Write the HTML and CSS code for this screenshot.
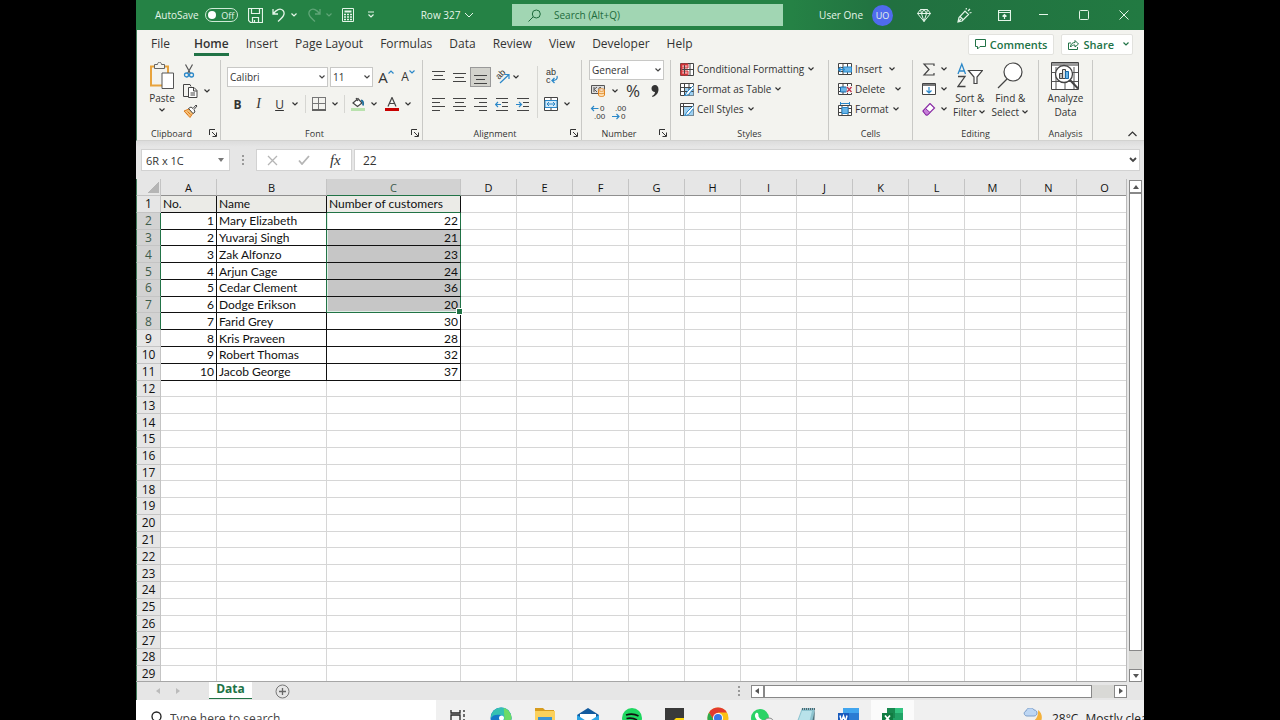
FILE: index.html
```html
<!DOCTYPE html>
<html lang="en">

<head>
    <meta charset="UTF-8">
    <meta name="viewport" content="width=device-width, initial-scale=1.0">
    <link rel="stylesheet" href="styles.css">
    <title>Row 327 - Excel</title>
</head>

<body>
    <svg class="sprite" aria-hidden="true">
        <symbol id="chev" viewBox="0 0 8 8"><path d="M1.500 2.500L4 5l2.500-2.500" fill="none" stroke="currentColor" stroke-width="1.200"/></symbol>
        <symbol id="launch" viewBox="0 0 8 8"><path d="M.5 6V.5H6M3 3l4 4M7.500 3.500v4h-4" fill="none" stroke="currentColor"/></symbol>
    </svg>

    <div class="app">
        <header class="titlebar">
            <div class="quick">
                <label class="autosave" for="autosave">AutoSave</label>
                <button class="toggle" id="autosave"><span class="knob"></span>Off</button>
                <button class="quick-btn" aria-label="Save"><svg width="15" height="15" viewBox="0 0 15 15"><path d="M.5.5h14v14h-12l-2-2zM3.500.5v5h8v-5M4.500 14.500v-5h6v5M6.500 12v2" fill="none" stroke="currentColor" stroke-width="1.200"/></svg></button>
                <button class="quick-btn" aria-label="Undo"><svg width="14" height="14" viewBox="0 0 14 14"><path d="M1 1v5h5M1.500 5.500C4 2 8-.5 11 2.500c3 3.500-.5 7-5 11" fill="none" stroke="currentColor" stroke-width="1.300"/></svg><svg width="8" height="8"><use href="#chev"/></svg></button>
                <button class="quick-btn dim" aria-label="Redo"><svg width="14" height="14" viewBox="0 0 14 14"><path d="M13 1v5H8M12.500 5.500C10 2 6-.5 3 2.500c-3 3.500.5 7 5 11" fill="none" stroke="currentColor" stroke-width="1.300"/></svg><svg width="8" height="8"><use href="#chev"/></svg></button>
                <button class="quick-btn" aria-label="Calculator"><svg width="12" height="14" viewBox="0 0 12 14"><path d="M.5.5h11v13H.5z" fill="none" stroke="currentColor"/><path d="M2.500 3.500h7" stroke="currentColor" stroke-width="2"/><path d="M2 6.500h8M2 9h8M2 11.500h8" stroke="currentColor" stroke-width="1.500" stroke-dasharray="2 1"/></svg></button>
                <button class="quick-btn last" aria-label="Customize toolbar"><svg width="8" height="8" viewBox="0 0 8 8"><path d="M1 1h6M1.500 3.500L4 6l2.500-2.500" fill="none" stroke="currentColor" stroke-width="1.200"/></svg></button>
                <button class="doc-name">Row 327<svg width="10" height="7" viewBox="0 0 10 7"><path d="M1 1l4 4 4-4" fill="none" stroke="currentColor"/></svg></button>
            </div>
            <div class="search">
                <svg width="13" height="13" viewBox="0 0 13 13"><path d="M.5 12.500L5 8M4.300 5a4 4 0 1 1 8 0a4 4 0 0 1-8 0" fill="none" stroke="currentColor"/></svg>
                <input class="search-input" type="text" placeholder="Search (Alt+Q)" aria-label="Search">
            </div>
            <div class="account">
                <span class="user">User One</span>
                <span class="avatar">UO</span>
                <button class="win-btn" aria-label="Premium"><svg width="14" height="13" viewBox="0 0 14 13"><path d="M3.500.5h7l3 4L7 12.500.5 4.500zM.5 4.500h13M3.500.5l1 4L7 12.500l2.500-8 1-4M4.500 4.500L7 .5l2.500 4" fill="none" stroke="currentColor"/></svg></button>
                <button class="win-btn" aria-label="Feedback"><svg width="15" height="15" viewBox="0 0 15 15"><path d="M1 14l1-4.500L8 3l3.500 3.500L5 13zM3 8.500L6.500 12M1 14l3-3M9 1.500l.5-1.500M11 3l2-2M12.500 5l2-.5" fill="none" stroke="currentColor" stroke-width="1.200"/></svg></button>
                <button class="win-btn" aria-label="Ribbon display"><svg width="13" height="11" viewBox="0 0 13 11"><path d="M.5.5h12v10H.5zM.5 2.500h12M6.500 9V4.500M4.500 6.500l2-2 2 2" fill="none" stroke="currentColor" stroke-width="1.200"/></svg></button>
                <button class="win-btn" aria-label="Minimize"><svg width="10" height="10" viewBox="0 0 10 10"><path d="M0 4.500h9" stroke="currentColor"/></svg></button>
                <button class="win-btn" aria-label="Maximize"><svg width="10" height="10" viewBox="0 0 10 10"><rect x=".5" y=".5" width="9" height="9" rx="1" fill="none" stroke="currentColor"/></svg></button>
                <button class="win-btn" aria-label="Close"><svg width="10" height="10" viewBox="0 0 10 10"><path d="M.5.5l9 9M9.500.5l-9 9" stroke="currentColor"/></svg></button>
            </div>
        </header>

        <nav class="tabs">
            <a class="tab first" href="#">File</a>
            <a class="tab active" href="#">Home</a>
            <a class="tab" href="#">Insert</a>
            <a class="tab" href="#">Page Layout</a>
            <a class="tab" href="#">Formulas</a>
            <a class="tab" href="#">Data</a>
            <a class="tab" href="#">Review</a>
            <a class="tab" href="#">View</a>
            <a class="tab" href="#">Developer</a>
            <a class="tab" href="#">Help</a>
            <button class="pill push"><svg width="11" height="11" viewBox="0 0 11 11"><path d="M.5.5h10v7H5l-2.500 2.500V7.500h-2z" fill="none" stroke="currentColor"/></svg>Comments</button>
            <button class="pill"><svg width="11" height="11" viewBox="0 0 11 11"><path d="M3 4H.5v6.500h9V8M2.500 8c0-3 2-4.500 4.500-4.500v-2L10.500 5 7 8V6C5 6 3.500 6.500 2.500 8z" fill="none" stroke="currentColor"/></svg>Share<svg class="pill-chev" width="8" height="8"><use href="#chev"/></svg></button>
        </nav>

        <section class="ribbon">
            <div class="group">
                <div class="group-body clipboard">
                    <button class="big paste"><svg width="26" height="28" viewBox="0 0 26 28"><path d="M2 4.500h17v19H2z" fill="none" stroke="#e8a33d" stroke-width="2"/><path d="M5.500 6.500v-4h3c0-3 4-3 4 0h3v4z" fill="#f3f3ef" stroke="#666"/><path d="M13 11h11.500v15.500H13z" fill="#fff" stroke="#555"/></svg>Paste<svg width="8" height="8"><use href="#chev"/></svg></button>
                    <div class="tool-col">
                        <button class="tool" aria-label="Cut"><svg width="12" height="14" viewBox="0 0 12 14"><path d="M2.500.5l5 9M9.500.5l-5 9" stroke="#555" stroke-width="1.200"/><circle cx="3.500" cy="11" r="2" fill="none" stroke="#2b88c9" stroke-width="1.300"/><circle cx="8.500" cy="11" r="2" fill="none" stroke="#2b88c9" stroke-width="1.300"/></svg></button>
                        <button class="tool" aria-label="Copy"><svg width="15" height="14" viewBox="0 0 15 14"><path d="M5 12.500H.5V.5H7l1 2" fill="none" stroke="#444"/><path d="M5.500 3.500h5.500l3 3v7H5.500zM10.500 3.500v3.500h3.500M7.500 9h4.500M7.500 11h4.500" fill="#fff" stroke="#444"/></svg><svg width="8" height="8"><use href="#chev"/></svg></button>
                        <button class="tool" aria-label="Format Painter"><svg width="15" height="14" viewBox="0 0 15 14"><path d="M1 7l5-2 4 4-3 4.500z" fill="#f4c078" stroke="#dd7a1b"/><path d="M3 9l2 2M4.500 7.500l3 3" stroke="#dd7a1b"/><path d="M5.500 4.500L8 3l2 1.500L13 1l1 1-3 3.500L12 8l-2 1.500z" fill="#fff" stroke="#444"/></svg></button>
                    </div>
                </div>
                <div class="group-label">Clipboard<svg class="launcher" width="8" height="8"><use href="#launch"/></svg></div>
            </div>

            <div class="group">
                <div class="group-body rows">
                    <div class="tool-row">
                        <select class="box font-name" aria-label="Font"><option>Calibri</option></select>
                        <select class="box font-size" aria-label="Font size"><option>11</option></select>
                        <button class="letter grow" aria-label="Increase font size">A<svg width="6" height="4" viewBox="0 0 6 4"><path d="M.5 3.500L3 1l2.500 2.500" fill="none" stroke="#2b88c9" stroke-width="1.200"/></svg></button>
                        <button class="letter shrink" aria-label="Decrease font size">A<svg width="6" height="4" viewBox="0 0 6 4"><path d="M.5.5L3 3 5.500.5" fill="none" stroke="#2b88c9" stroke-width="1.200"/></svg></button>
                    </div>
                    <div class="tool-row">
                        <button class="char bold">B</button>
                        <button class="char italic">I</button>
                        <button class="char underline">U</button>
                        <button class="drop" aria-label="Underline style"><svg width="8" height="8"><use href="#chev"/></svg></button>
                        <span class="divider"></span>
                        <button class="tool" aria-label="Borders"><svg width="14" height="14" viewBox="0 0 14 14"><path d="M.5 0v12M13.500 0v12M6.500 0v12M0 .5h14M0 6.500h14" stroke="#777"/><path d="M0 13h14" stroke="#333" stroke-width="1.500"/></svg><svg width="8" height="8"><use href="#chev"/></svg></button>
                        <span class="divider"></span>
                        <button class="tool" aria-label="Fill color"><svg width="14" height="14" viewBox="0 0 14 14"><path d="M2 6l5-4.500L11 6 6.500 9.500zM5 1l2 3" fill="#fff" stroke="#444" stroke-width="1.200"/><path d="M10 3.500c2 0 2.500 2 2 5" fill="none" stroke="#1f6f9c" stroke-width="1.800"/><path d="M0 11h14v3H0z" fill="#b9e2ae"/></svg><svg width="8" height="8"><use href="#chev"/></svg></button>
                        <button class="tool" aria-label="Font color"><svg width="14" height="14" viewBox="0 0 14 14"><path d="M3 9.500L7 .5l4 9M4.500 6.500h5" fill="none" stroke="#444" stroke-width="1.200"/><path d="M0 11h14v3H0z" fill="#c80000"/></svg><svg width="8" height="8"><use href="#chev"/></svg></button>
                    </div>
                </div>
                <div class="group-label">Font<svg class="launcher" width="8" height="8"><use href="#launch"/></svg></div>
            </div>

            <div class="group">
                <div class="group-body align">
                    <div class="align-grid">
                        <button class="sq" aria-label="Top align"><svg width="13" height="13" viewBox="0 0 13 13"><path d="M0 .5h13M2 4.500h9M0 8.500h13" stroke="#444"/></svg></button>
                        <button class="sq" aria-label="Middle align"><svg width="13" height="13" viewBox="0 0 13 13"><path d="M0 2.500h13M2 6.500h9M0 10.500h13" stroke="#444"/></svg></button>
                        <button class="sq on" aria-label="Bottom align"><svg width="13" height="13" viewBox="0 0 13 13"><path d="M0 4.500h13M2 8.500h9M0 12.500h13" stroke="#444"/></svg></button>
                        <button class="sq wide" aria-label="Orientation"><svg class="glyph" width="15" height="14" viewBox="0 0 15 14"><text x="0" y="0" font-size="9" transform="translate(4 10) rotate(-45)" fill="#333">ab</text><path d="M5 13l8.500-8M9.500 4.500H14V9" fill="none" stroke="#2b88c9" stroke-width="1.200"/></svg><svg width="8" height="8"><use href="#chev"/></svg></button>
                        <button class="sq" aria-label="Align left"><svg width="13" height="13" viewBox="0 0 13 13"><path d="M0 .5h13M0 4.500h8M0 8.500h13M0 12.500h8" stroke="#444"/></svg></button>
                        <button class="sq" aria-label="Center"><svg width="13" height="13" viewBox="0 0 13 13"><path d="M0 .5h13M2 4.500h9M0 8.500h13M2 12.500h9" stroke="#444"/></svg></button>
                        <button class="sq" aria-label="Align right"><svg width="13" height="13" viewBox="0 0 13 13"><path d="M0 .5h13M5 4.500h8M0 8.500h13M5 12.500h8" stroke="#444"/></svg></button>
                        <button class="sq" aria-label="Decrease indent"><svg width="13" height="13" viewBox="0 0 13 13"><path d="M1 .5h12M7 4.500h6M7 8.500h6M1 12.500h12" stroke="#444"/><path d="M6 6.500H.5M3 4L.5 6.500 3 9" fill="none" stroke="#2b88c9" stroke-width="1.200"/></svg></button>
                        <button class="sq" aria-label="Increase indent"><svg width="13" height="13" viewBox="0 0 13 13"><path d="M1 .5h12M7 4.500h6M7 8.500h6M1 12.500h12" stroke="#444"/><path d="M0 6.500h5.500M3 4l2.500 2.500L3 9" fill="none" stroke="#2b88c9" stroke-width="1.200"/></svg></button>
                    </div>
                    <span class="divider tall"></span>
                    <div class="wrap-col">
                        <button class="tool" aria-label="Wrap text"><svg class="glyph" width="14" height="16" viewBox="0 0 14 16"><text x="2" y="6" font-size="9" fill="#333">ab</text><text x="2" y="14" font-size="9" fill="#333">c</text><path d="M13 7c1 3-1 4.500-5 4.500M10.500 9L8 11.500l2.500 2.500" fill="none" stroke="#2b88c9" stroke-width="1.300"/></svg></button>
                        <button class="tool" aria-label="Merge and center"><svg width="14" height="14" viewBox="0 0 14 14"><path d="M.5.5h13v13H.5z" fill="#fff" stroke="#444"/><path d="M1 3.500h12v7H1z" fill="#d5eaf8" stroke="#2b88c9"/><path d="M7 0v3M7 11v3" stroke="#444"/><path d="M3 7h8M5 5L3 7l2 2M9 5l2 2-2 2" fill="none" stroke="#2b88c9"/></svg><svg width="8" height="8"><use href="#chev"/></svg></button>
                    </div>
                </div>
                <div class="group-label">Alignment<svg class="launcher" width="8" height="8"><use href="#launch"/></svg></div>
            </div>

            <div class="group">
                <div class="group-body number">
                    <select class="box" aria-label="Number format"><option>General</option></select>
                    <div class="tool-row">
                        <button class="tool" aria-label="Accounting format"><svg width="15" height="13" viewBox="0 0 15 13"><path d="M.5 1.500h13v8H.5z" fill="#ddd" stroke="#555"/><path d="M3 3v5M3 5.500L6 3M3.500 5.500L6 8M10 3.500c-3-1-3 4 0 4" fill="none" stroke="#555"/><path d="M7.500 6v5c0 2 6 2 6 0V6z" fill="#fce0b5" stroke="#e08420"/><ellipse cx="10.500" cy="6" rx="3" ry="1.200" fill="#fff" stroke="#e08420"/><path d="M7.500 8.500c0 1.500 6 1.500 6 0" fill="none" stroke="#e08420"/></svg><svg width="8" height="8"><use href="#chev"/></svg></button>
                        <button class="symbol" aria-label="Percent style">%</button>
                        <button class="symbol" aria-label="Comma style"><svg width="8" height="12" viewBox="0 0 8 12"><path d="M4 0c2 0 3.500 1.500 3.500 4.500C7.500 8 5 11 1.500 12l-.5-1c2-1 3-2.500 3-4C2 7 .5 5.500.5 3.500S2 0 4 0z" fill="#333"/></svg></button>
                    </div>
                    <div class="tool-row">
                        <button class="tool" aria-label="Increase decimal"><svg class="glyph" width="15" height="14" viewBox="0 0 15 14"><text x="9" y="6" font-size="8" fill="#333">0</text><text x="3" y="14" font-size="8" fill="#333">.00</text><path d="M7.500 3.500h-7M3 1L.5 3.500 3 6" fill="none" stroke="#2b88c9" stroke-width="1.200"/></svg></button>
                        <button class="tool" aria-label="Decrease decimal"><svg class="glyph" width="15" height="14" viewBox="0 0 15 14"><text x="3" y="6" font-size="8" fill="#333">.00</text><text x="9" y="14" font-size="8" fill="#333">0</text><path d="M0 11.500h7M4.500 9L7 11.500 4.500 14" fill="none" stroke="#2b88c9" stroke-width="1.200"/></svg></button>
                    </div>
                </div>
                <div class="group-label">Number<svg class="launcher" width="8" height="8"><use href="#launch"/></svg></div>
            </div>

            <div class="group">
                <div class="group-body list">
                    <button class="item"><svg width="14" height="13" viewBox="0 0 14 13"><path d="M.5.5h13v12H.5z" fill="#fff" stroke="#444"/><path d="M1 1h7v4H1zM1 8h7v4H1z" fill="#f3a0a4" stroke="#d13438"/><path d="M4.500.5v12M10 .5v12M.5 6.500h13" stroke="#444"/><path d="M1.500 1v11M1.500 1.500h6M1.500 11.500h6" stroke="#d13438" stroke-width="1.500"/></svg>Conditional Formatting<svg width="8" height="8"><use href="#chev"/></svg></button>
                    <button class="item"><svg width="14" height="13" viewBox="0 0 14 13"><path d="M.5.5h13v12H.5z" fill="#fff" stroke="#444"/><path d="M4.500 4.500h9v8h-9z" fill="#9fd0f0"/><path d="M4.500.5v12M9 .5v12M.5 4.500h13M.5 8.500h13" stroke="#444"/><path d="M13.500 2.500L7 9l-2.500 4 4-1.500 5-6" fill="#fff" stroke="#2b88c9"/></svg>Format as Table<svg width="8" height="8"><use href="#chev"/></svg></button>
                    <button class="item"><svg width="14" height="13" viewBox="0 0 14 13"><path d="M.5.5h13v12H.5z" fill="#fff" stroke="#444"/><path d="M3.500 3.500h10v9h-10z" fill="#9fd0f0"/><path d="M3.500.5v12M.5 3.500h13" stroke="#444"/><path d="M13.500 2.500L7 9l-2.500 4 4-1.500 5-6" fill="#fff" stroke="#2b88c9"/></svg>Cell Styles<svg width="8" height="8"><use href="#chev"/></svg></button>
                </div>
                <div class="group-label">Styles</div>
            </div>

            <div class="group">
                <div class="group-body list cells">
                    <button class="item"><svg width="14" height="13" viewBox="0 0 14 13"><path d="M.5.5h13v11H.5zM.5 4.500h13M.5 8.500h13M5 .5v11M9.500 .5v11" fill="#fff" stroke="#444"/><path d="M5.500 4h8v5h-8z" fill="#69b5e8" stroke="#2b88c9"/><path d="M7 6.500H.5M3 4L.5 6.500 3 9" fill="none" stroke="#2b88c9" stroke-width="1.300"/></svg>Insert<svg class="push" width="8" height="8"><use href="#chev"/></svg></button>
                    <button class="item wide"><svg width="14" height="13" viewBox="0 0 14 13"><path d="M.5.5h13v11H.5zM.5 4.500h13M.5 8.500h13M5 .5v11M9.500 .5v11" fill="#fff" stroke="#444"/><path d="M2.500 4h6v5h-6z" fill="#69b5e8" stroke="#1768a8"/><path d="M8.500 3h5.500v7H8.500z" fill="#f3f3ef"/><path d="M9 4l4.500 5M13.500 4L9 9" stroke="#c4314b" stroke-width="1.300"/></svg>Delete<svg class="push" width="8" height="8"><use href="#chev"/></svg></button>
                    <button class="item"><svg width="14" height="14" viewBox="0 0 14 14"><path d="M.5 3.500h13v10H.5zM.5 6.500h13M.5 10.500h13M4 3.500v10M10 3.500v10" fill="#fff" stroke="#444"/><path d="M4 5.500h6v6H4z" fill="#69b5e8" stroke="#2b88c9"/><path d="M2.500 1.500h9M2.500 0v3M11.500 0v3" stroke="#2b88c9"/></svg>Format<svg class="push" width="8" height="8"><use href="#chev"/></svg></button>
                </div>
                <div class="group-label">Cells</div>
            </div>

            <div class="group">
                <div class="group-body editing">
                    <div class="tool-col">
                        <button class="tool" aria-label="AutoSum"><svg width="14" height="13" viewBox="0 0 14 13"><path d="M12 3V1H2l5 5.500L2 12h10v-2" fill="none" stroke="#444" stroke-width="1.200"/></svg><svg width="8" height="8"><use href="#chev"/></svg></button>
                        <button class="tool" aria-label="Fill"><svg width="14" height="12" viewBox="0 0 14 12"><path d="M.5.5h13v11H.5z" fill="#fff" stroke="#444"/><path d="M1 2h12" stroke="#777" stroke-width="2"/><path d="M7 4v6M4.500 7.500L7 10l2.500-2.500" fill="none" stroke="#2b88c9" stroke-width="1.200"/></svg><svg width="8" height="8"><use href="#chev"/></svg></button>
                        <button class="tool" aria-label="Clear"><svg width="14" height="13" viewBox="0 0 14 13"><path d="M1 8l7-7.500L12.500 5 5.500 12H4z" fill="#fff" stroke="#8a2da5" stroke-width="1.200"/><path d="M1 8l2.500-2.500L8 9.500 5.500 12H4z" fill="#c77fd8" stroke="#8a2da5"/></svg><svg width="8" height="8"><use href="#chev"/></svg></button>
                    </div>
                    <button class="big"><svg width="26" height="28" viewBox="0 0 26 28"><path d="M1 12L4.800 2 8.500 12M2.300 9h5" fill="none" stroke="#2b88c9" stroke-width="1.300"/><path d="M1 14.500h7l-7 10h7.500" fill="none" stroke="#444" stroke-width="1.300"/><path d="M11.500 8.500h14L20 15v6.500h-3V15z" fill="#fff" stroke="#444" stroke-width="1.200"/></svg><span>Sort &amp;<br>Filter<svg class="text-chev" width="8" height="8"><use href="#chev"/></svg></span></button>
                    <button class="big"><svg width="26" height="28" viewBox="0 0 26 28"><circle cx="16" cy="10" r="9" fill="#fff" stroke="#444" stroke-width="1.200"/><path d="M10 17L1 26" stroke="#444" stroke-width="1.200"/></svg><span>Find &amp;<br>Select<svg class="text-chev" width="8" height="8"><use href="#chev"/></svg></span></button>
                </div>
                <div class="group-label">Editing</div>
            </div>

            <div class="group">
                <div class="group-body analysis">
                    <button class="big"><svg width="28" height="28" viewBox="0 0 28 28"><path d="M.5.5h27v27H.5z" fill="#fff" stroke="#444"/><path d="M1 2.500h26" stroke="#999" stroke-width="3"/><path d="M.5 10.500h27M.5 19.500h27M5 5v22M14 5v22M23 5v22" stroke="#555"/><circle cx="13" cy="12" r="8.500" fill="#fff" stroke="#444" stroke-width="1.300"/><path d="M8.500 11.500h3v5h-3z" fill="#bbb" stroke="#444"/><path d="M11.500 7.500h3v9h-3z" fill="#ddd" stroke="#444"/><path d="M14.500 9.500h3v7h-3z" fill="#69b5e8" stroke="#1768a8"/><path d="M19 18l8 8.500" stroke="#444" stroke-width="2"/></svg><span>Analyze<br>Data</span></button>
                </div>
                <div class="group-label">Analysis</div>
            </div>

            <button class="collapse" aria-label="Collapse ribbon"><svg width="9" height="6" viewBox="0 0 9 6"><path d="M.5 5l4-4 4 4" fill="none" stroke="currentColor" stroke-width="1.200"/></svg></button>
        </section>

        <div class="formula-bar">
            <div class="name-box">
                <input class="name-input" type="text" value="6R x 1C" aria-label="Name box">
                <svg width="6" height="4" viewBox="0 0 6 4"><path d="M0 0h6L3 4z" fill="#777"/></svg>
            </div>
            <span class="grip"></span>
            <div class="fx">
                <button class="fx-btn" aria-label="Cancel"><svg width="11" height="11" viewBox="0 0 11 11"><path d="M1 1l9 9M10 1l-9 9" stroke="#b5b5b5" stroke-width="1.300"/></svg></button>
                <button class="fx-btn" aria-label="Enter"><svg width="12" height="10" viewBox="0 0 12 10"><path d="M1 5.500L4 9l7-8" fill="none" stroke="#b5b5b5" stroke-width="1.800"/></svg></button>
                <button class="fx-btn fx-sign" aria-label="Insert function">fx</button>
            </div>
            <div class="formula">
                <input class="formula-input" type="text" value="22" aria-label="Formula bar">
                <svg width="8" height="8" viewBox="0 0 8 8"><path d="M1 2l3 3 3-3" fill="none" stroke="#444" stroke-width="1.800"/></svg>
            </div>
        </div>

        <main class="sheet">
            <div class="grid-area">
                <table class="grid">
                    <colgroup id="cols"></colgroup>
                    <thead id="head"></thead>
                    <tbody id="rows"></tbody>
                </table>
            </div>
            <div class="vscroll">
                <button class="arrow" aria-label="Scroll up"><svg width="6" height="4" viewBox="0 0 6 4"><path d="M0 4h6L3 0z" fill="#555"/></svg></button>
                <span class="thumb"></span>
                <span class="track"></span>
                <button class="arrow" aria-label="Scroll down"><svg width="6" height="4" viewBox="0 0 6 4"><path d="M0 0h6L3 4z" fill="#555"/></svg></button>
            </div>
        </main>

        <footer class="sheet-bar">
            <div class="sheet-nav">
                <button class="nav-btn" aria-label="Previous sheet"><svg width="4" height="6" viewBox="0 0 4 6"><path d="M4 0v6L0 3z" fill="#bbb"/></svg></button>
                <button class="nav-btn" aria-label="Next sheet"><svg width="4" height="6" viewBox="0 0 4 6"><path d="M0 0v6l4-3z" fill="#bbb"/></svg></button>
            </div>
            <a class="sheet-tab" href="#">Data</a>
            <button class="add-sheet" aria-label="New sheet"><svg width="15" height="15" viewBox="0 0 15 15"><circle cx="7.500" cy="7.500" r="6.500" fill="none" stroke="#777"/><path d="M7.500 4v7M4 7.500h7" stroke="#666" stroke-width="1.300"/></svg></button>
            <span class="grip push"></span>
            <div class="hscroll">
                <button class="arrow" aria-label="Scroll left"><svg width="4" height="6" viewBox="0 0 4 6"><path d="M4 0v6L0 3z" fill="#555"/></svg></button>
                <span class="thumb"></span>
                <span class="track"></span>
                <button class="arrow" aria-label="Scroll right"><svg width="4" height="6" viewBox="0 0 4 6"><path d="M0 0v6l4-3z" fill="#555"/></svg></button>
            </div>
        </footer>

        <div class="taskbar">
            <div class="task-search">
                <svg width="13" height="14" viewBox="0 0 13 14"><circle cx="7.500" cy="5.500" r="4.500" fill="none" stroke="#222" stroke-width="1.300"/><path d="M4.500 9L1 13" stroke="#222" stroke-width="1.300"/></svg>
                <input class="task-input" type="text" placeholder="Type here to search" aria-label="Type here to search">
            </div>
            <div class="task-apps">
                <button class="app-btn" aria-label="Task view"><svg width="16" height="16" viewBox="0 0 16 16"><path d="M1 0v3h9V0M1 16v-3h9v3M1 5h9v6H1zM14 0v2M14 4v3M14 9v7" fill="none" stroke="#222" stroke-width="1.300"/></svg></button>
                <button class="app-btn" aria-label="Edge"><svg width="22" height="22" viewBox="0 0 22 22"><circle cx="11" cy="11" r="10.500" fill="#1478c8"/><path d="M1 9C3-2 21-3 21.500 11c0 4-5 5-8 3 2-3 0-6-3-6-4-1-8 0-9.500 3z" fill="#35c1b2"/><path d="M14 1c5 2 7.500 6 7.500 10 0 3-4 4.500-8 3 2-2 0-8 .5-13z" fill="#6ddb65"/><circle cx="11.500" cy="11" r="2.500" fill="#fff"/></svg></button>
                <button class="app-btn" aria-label="File Explorer"><svg width="22" height="20" viewBox="0 0 22 20"><path d="M1 0h8l2 2h9v16H1z" fill="#d79c1e"/><path d="M1 3h20v16H1z" fill="#fbd15c"/><path d="M4 9h14v10H4z" fill="#3c94d6"/></svg></button>
                <button class="app-btn" aria-label="Mail"><svg width="22" height="20" viewBox="0 0 22 20"><path d="M0 7l11-7 11 7v12H0z" fill="#125a9e"/><path d="M3 6h16v8H3z" fill="#fff"/><path d="M0 7l11 7 11-7v12H0z" fill="#2ca5e6"/></svg></button>
                <button class="app-btn" aria-label="Spotify"><svg width="20" height="20" viewBox="0 0 20 20"><circle cx="10" cy="10" r="10" fill="#1ed760"/><path d="M4 7c5-1.500 9-1 12.500 1M4.500 10.500c4-1 7-.5 10.500 1.500M5 13.500c4-1 6 0 9 1.500" fill="none" stroke="#111" stroke-width="1.700"/></svg></button>
                <button class="app-btn" aria-label="Sticky Notes"><svg width="19" height="20" viewBox="0 0 19 20"><path d="M0 0h19v20H0z" fill="#3a3a3a"/><path d="M9 20v-8l2-2h8v10z" fill="#ffd60a"/></svg></button>
                <button class="app-btn" aria-label="Chrome"><svg width="22" height="22" viewBox="0 0 22 22"><circle cx="11" cy="11" r="10.500" fill="#fbc116"/><path d="M2 5.500A10.500 10.500 0 0 1 20 5.500H11L6.500 13z" fill="#e33b2e"/><path d="M2 5.500l5 8 4 2.500-1 5.500A10.500 10.500 0 0 1 2 5.500z" fill="#2da94f"/><circle cx="11" cy="11" r="5" fill="#fff"/><circle cx="11" cy="11" r="4" fill="#3b78e7"/></svg></button>
                <button class="app-btn" aria-label="WhatsApp"><svg width="24" height="21" viewBox="0 0 24 21"><circle cx="10" cy="10" r="9" fill="#2bd366"/><path d="M6 5c2-1 2.500 1 2.500 2.500C8 9 11 12 12.500 12c2-.5 4 1 2 2.500C10 17 2 9 6 5z" fill="#fff"/><circle cx="19" cy="15" r="5" fill="#eee" stroke="#888"/></svg></button>
                <button class="app-btn" aria-label="Notepad"><svg width="22" height="20" viewBox="0 0 22 20"><path d="M8 0h13l-3 19H1z" fill="#8dc3cf"/><path d="M8 3h10l-4 16H2z" fill="#b8e2ea"/><path d="M8 1h13" stroke="#51656d" stroke-width="2" stroke-dasharray="1 1"/><path d="M21 1l-1 18h-3z" fill="#4f727c"/></svg></button>
                <button class="app-btn" aria-label="Word"><svg width="21" height="20" viewBox="0 0 21 20"><path d="M5 0h16v20H5z" fill="#2b7cd3"/><path d="M5 0h16v5H5z" fill="#41a5ee"/><path d="M0 5h11v11H0z" fill="#185abd"/><path d="M2 7.500L3.500 13.500 5.500 8 7.500 13.500 9 7.500" fill="none" stroke="#fff" stroke-width="1.500"/></svg></button>
                <button class="app-btn current" aria-label="Excel"><svg width="21" height="20" viewBox="0 0 21 20"><path d="M5 0h16v20H5z" fill="#21a366"/><path d="M5 0h8v10H5z" fill="#18894f"/><path d="M13 0h8v5h-8z" fill="#33c481"/><path d="M0 5h11v11H0z" fill="#107c41"/><path d="M3 7.500l5 6M8 7.500l-5 6" stroke="#fff" stroke-width="1.700"/></svg></button>
            </div>
            <div class="weather">
                <svg width="22" height="20" viewBox="0 0 22 20"><path d="M15 2c6 4 5 14-3 16-4 1-8-1-9-4 7 2 13-4 12-12z" fill="#f3b13c"/><path d="M4 8c-3 0-4-4-1-5 1-4 7-4 8-1 4 0 4 6 0 6z" fill="#bdd6f3" stroke="#7d9fca"/></svg>
                <span>28°C</span>
                <span>Mostly clear</span>
            </div>
        </div>
    </div>

    <script>
        const columns = 'ABCDEFGHIJKLMNO'.split('')
        const widths = { A: 56, B: 110, C: 134 }
        const names = ['Mary Elizabeth', 'Yuvaraj Singh', 'Zak Alfonzo', 'Arjun Cage', 'Cedar Clement',
            'Dodge Erikson', 'Farid Grey', 'Kris Praveen', 'Robert Thomas', 'Jacob George']
        const customers = [22, 21, 23, 24, 36, 20, 30, 28, 32, 37]
        const data = [['No.', 'Name', 'Number of customers']]
        names.forEach((name, i) => data.push([i + 1, name, customers[i]]))

        let addCell = (row, tag, text, classes) => {
            const cell = document.createElement(tag)
            cell.textContent = text
            cell.className = classes
            row.appendChild(cell)
            return cell
        }

        const cols = document.getElementById('cols')
        cols.appendChild(document.createElement('col')).style.width = '25px'
        columns.forEach(c => {
            cols.appendChild(document.createElement('col')).style.width = (widths[c] || 56) + 'px'
        })

        const head = document.getElementById('head').insertRow()
        addCell(head, 'th', '', 'corner')
        columns.forEach(c => addCell(head, 'th', c, c === 'C' ? 'col-head picked' : 'col-head'))

        for (let r = 1; r <= 29; r++) {
            const row = document.getElementById('rows').insertRow()
            addCell(row, 'th', r, r > 1 && r < 9 ? 'row-head picked' : 'row-head')
            columns.forEach((c, i) => {
                const value = data[r - 1] && i < 3 ? data[r - 1][i] : ''
                const classes = ['cell']
                if (r <= 11 && i < 3) classes.push('boxed')
                if (r === 1 && i < 3) classes.push('title')
                if (typeof value === 'number') classes.push('num')
                if (r > 1 && r < 8 && i === 1) classes.push('before')
                if (r > 1 && r < 8 && i === 2) classes.push('selected')
                if (r === 1 && i === 2) classes.push('above')
                if (r === 2 && i === 2) classes.push('start')
                if (r === 7 && i === 2) classes.push('end')
                addCell(row, 'td', value, classes.join(' '))
            })
        }
    </script>
</body>

</html>
```
FILE: styles.css
```css
* {
    margin: 0;
    padding: 0;
    box-sizing: border-box;
}

body {
    background: #000;
    height: 100vh;
    overflow: hidden;
    font-family: "Open Sans", "Noto Sans", sans-serif;
    font-size: 10px;
    color: #333;
}

button,
input,
select {
    font: inherit;
    color: inherit;
    border: none;
    background: none;
    outline: none;
    min-width: 0;
}

button {
    display: flex;
    align-items: center;
    justify-content: center;
}

a {
    color: inherit;
    text-decoration: none;
}

svg {
    flex: none;
}

.sprite {
    display: none;
}

.push {
    margin-left: auto;
}

/* the bottom of the taskbar runs off the screen */
.app {
    max-width: 1008px;
    height: calc(100vh + 16px);
    margin: 0 auto;
    display: flex;
    flex-direction: column;
    background: #e6e6e6;
    overflow: hidden;
}

/* title bar */
.titlebar {
    flex: none;
    height: 30px;
    display: flex;
    align-items: center;
    background: linear-gradient(to right, #258245 65%, #217040 75%, #227a42);
    color: #e4f5e8;
}

.quick {
    width: 376px;
    padding-left: 19px;
    display: flex;
    align-items: center;
}

.toggle {
    width: 33px;
    height: 14px;
    margin: 0 10px 0 6px;
    gap: 5px;
    border: 1px solid #cfead6;
    border-radius: 7px;
    font-size: 9px;
}

.knob {
    width: 8px;
    height: 8px;
    border-radius: 50%;
    background: #fff;
}

.quick-btn {
    gap: 4px;
    margin-right: 9px;
}

.quick-btn.dim {
    color: #5fa577;
}

.quick-btn.last {
    margin: 0 46px 0 4px;
}

.doc-name {
    gap: 4px;
}

.search {
    flex: 1;
    height: 22px;
    display: flex;
    align-items: center;
    gap: 13px;
    padding-left: 16px;
    background: #a1d6b3;
    color: #1e6b3c;
}

.search-input {
    flex: 1;
}

.search-input::placeholder {
    color: #1e6b3c;
}

.account {
    width: 361px;
    display: flex;
    align-items: center;
    justify-content: flex-end;
}

.avatar {
    width: 21px;
    height: 21px;
    margin: 0 11px 0 9px;
    border-radius: 50%;
    background: #4f6bed;
    font-size: 9px;
    line-height: 21px;
    text-align: center;
}

.win-btn {
    width: 40px;
    height: 30px;
}

/* ribbon tabs */
.tabs {
    flex: none;
    height: 28px;
    padding: 0 11px 0 6px;
    display: flex;
    align-items: center;
    background: #f3f3ef;
    border-left: 1px solid #3f7a5a;
}

.tab {
    margin: 0 9px 0 8px;
    font-size: 12px;
    line-height: 18px;
    border-bottom: 3px solid transparent;
    border-top: 3px solid transparent;
}

.tab.first {
    margin-right: 16px;
}

.tab.active {
    font-weight: 600;
    border-bottom-color: #217346;
}

.pill {
    height: 21px;
    padding: 0 6px;
    gap: 4px;
    background: #fff;
    border: 1px solid #e2e2de;
    border-radius: 2px;
    font-size: 11px;
    font-weight: 600;
    color: #217346;
}

.pill + .pill {
    margin-left: 7px;
    padding-right: 2px;
}

.pill-chev {
    margin-left: 4px;
}

/* ribbon */
.ribbon {
    flex: none;
    display: flex;
    padding-top: 2px;
    background: #f3f3ef;
    border-left: 1px solid #3f7a5a;
    border-bottom: 1px solid #d2d2d0;
}

.group {
    flex: none;
    width: 84px;
    display: flex;
    flex-direction: column;
    border-right: 1px solid #c9c9c6;
}

.group:nth-child(2) {
    width: 202px;
}

.group:nth-child(3) {
    width: 159px;
}

.group:nth-child(4) {
    width: 89px;
}

.group:nth-child(5) {
    width: 158px;
}

.group:nth-child(7) {
    width: 126px;
}

.group:nth-child(8) {
    width: 54px;
}

.group-body {
    height: 66px;
    display: flex;
}

.group-label {
    position: relative;
    height: 14px;
    line-height: 15px;
    font-size: 9px;
    text-align: center;
    padding-right: 14px;
}

.group:nth-child(n + 5) .group-label {
    padding-right: 0;
}

.launcher {
    position: absolute;
    right: 3px;
    top: 3px;
}

.big {
    flex-direction: column;
    justify-content: flex-start;
    padding-top: 2px;
    gap: 1px;
    line-height: 14px;
    white-space: nowrap;
}

.text-chev {
    margin-left: 2px;
}

.tool {
    gap: 5px;
    justify-content: flex-start;
}

.tool-row {
    display: flex;
    align-items: center;
}

.tool-col {
    display: flex;
    flex-direction: column;
    gap: 2px;
}

.tool-col .tool {
    height: 18px;
}

.glyph {
    overflow: visible;
    font-family: "Liberation Sans", sans-serif;
}

.clipboard {
    gap: 8px;
    padding-left: 12px;
}

.clipboard .tool-col {
    padding-top: 2px;
}

.rows {
    flex-direction: column;
    gap: 7px;
    padding: 7px 0 0 6px;
}

.rows .tool-row {
    height: 20px;
}

.box {
    height: 20px;
    padding-left: 2px;
    border: 1px solid #c8c8c6;
    appearance: none;
    background: #fff url("data:image/svg+xml,%3Csvg xmlns='http://www.w3.org/2000/svg' width='8' height='8'%3E%3Cpath d='M1.500 2.500L4 5l2.500-2.500' fill='none' stroke='%23444' stroke-width='1.200'/%3E%3C/svg%3E") no-repeat right 1px center;
}

.font-name {
    width: 101px;
    margin-right: 2px;
}

.font-size {
    width: 43px;
    margin-right: 2px;
}

.letter {
    align-items: flex-start;
    width: 22px;
    font-size: 15px;
    line-height: 18px;
}

.letter.shrink {
    font-size: 12px;
}

.letter svg {
    margin-top: 2px;
}

.char {
    width: 21px;
    font-size: 12px;
}

.bold {
    font-weight: 700;
}

.italic {
    font-family: "Liberation Serif", serif;
    font-style: italic;
    font-size: 14px;
}

.underline {
    text-decoration: underline;
}

.drop {
    width: 10px;
}

.divider {
    width: 1px;
    height: 18px;
    margin: 0 6px 0 5px;
    background: #d6d6d2;
}

.rows .tool + .tool {
    margin-left: 7px;
}

.align {
    padding-left: 5px;
}

.align-grid {
    display: grid;
    grid-template-columns: repeat(5, 21px);
    grid-template-rows: 20px 20px;
    row-gap: 7px;
    padding-top: 7px;
}

.sq.on {
    background: #d2d2cc;
    border: 1px solid #999;
}

.sq.wide {
    grid-column: span 2;
    gap: 2px;
    justify-content: flex-start;
    padding-left: 4px;
}

.divider.tall {
    height: 52px;
    margin: 6px 6px 0 4px;
}

.wrap-col {
    display: grid;
    grid-template-rows: 20px 20px;
    row-gap: 7px;
    padding-top: 7px;
}

.number {
    flex-direction: column;
    padding: 0 6px 0 7px;
}

.number .tool-row {
    height: 21px;
    gap: 6px;
    padding-left: 2px;
}

.symbol {
    width: 16px;
    font-size: 17px;
    line-height: 20px;
}

.list {
    flex-direction: column;
    gap: 2px;
    align-items: flex-start;
    padding-left: 9px;
}

.item {
    height: 18px;
    gap: 3px;
    white-space: nowrap;
}

.cells .item {
    min-width: 58px;
}

.cells .item.wide {
    min-width: 64px;
}

.editing {
    gap: 5px;
    padding-left: 9px;
}

.editing .tool {
    gap: 4px;
}

.analysis {
    justify-content: center;
}

.collapse {
    margin-left: auto;
    align-self: flex-end;
    padding: 3px 7px;
}

/* formula bar */
.formula-bar {
    flex: none;
    height: 38px;
    padding: 0 4px 0 5px;
    display: flex;
    align-items: center;
    background: linear-gradient(#dcdcdc, #e6e6e6 6px);
    font-size: 12px;
}

.name-box,
.fx,
.formula {
    height: 22px;
    display: flex;
    align-items: center;
    background: #fff;
    border: 1px solid #d2d2d2;
}

.name-box {
    width: 89px;
    padding: 0 5px 0 4px;
    font-size: 11px;
}

.name-input,
.formula-input {
    flex: 1;
}

.grip {
    width: 2px;
    height: 10px;
    margin: 0 12px;
    background: repeating-linear-gradient(#999 0 2px, transparent 2px 4px);
}

.fx {
    width: 96px;
}

.fx-btn {
    flex: 1;
}

.fx-sign {
    font-family: "Liberation Serif", serif;
    font-style: italic;
    font-size: 15px;
}

.formula {
    flex: 1;
    margin-left: 2px;
    padding: 0 2px 0 8px;
}

/* sheet */
.sheet {
    flex: 1;
    min-height: 0;
    display: flex;
}

.grid-area {
    flex: 1;
    overflow: hidden;
    background: #fff;
    border-bottom: 1px solid #a6a6a6;
    border-right: 1px solid #bbb;
}

.grid {
    width: 997px;
    height: calc(100% + 2px);
    table-layout: fixed;
    border-collapse: separate;
    border-spacing: 0;
    font-family: Lato, "Open Sans", sans-serif;
    font-size: 12px;
    line-height: 15px;
    color: #111;
}

.corner,
.col-head,
.row-head {
    height: 16px;
    background: #e6e6e6;
    font-family: "Open Sans", sans-serif;
    font-weight: 400;
    border-right: 1px solid #c4c4c4;
    border-bottom: 1px solid #c4c4c4;
}

.col-head {
    height: 17px;
    font-size: 11px;
    border-bottom-color: #8f8f8f;
}

.corner {
    background: linear-gradient(135deg, transparent 50%, #b5b5b5 50%) no-repeat 10px 3px / 12px 11px #e6e6e6;
    border-left: 1px solid #3f7a5a;
}

.row-head {
    border-left: 1px solid #3f7a5a;
}

.picked {
    background: #d2d2d2;
    color: #3d5c4b;
}

.col-head.picked {
    border-bottom-color: #217346;
}

.row-head.picked {
    border-right-color: #217346;
}

.cell {
    position: relative;
    padding: 0 2px;
    white-space: nowrap;
    border-right: 1px solid #d6d6d6;
    border-bottom: 1px solid #d6d6d6;
}

.cell.boxed {
    border-color: #111;
}

.title {
    background: #ebebe7;
}

.num {
    text-align: right;
}

.cell.above {
    border-bottom-color: #217346;
}

.cell.before {
    border-right-color: #217346;
}

.cell.selected {
    background: #c6c6c6;
    border-right-color: #217346;
    box-shadow: inset 1px 0 #dfeee5;
}

.cell.start {
    background: #fff;
}

.cell.end {
    border-bottom-color: #217346;
    box-shadow: inset 1px -1px #dfeee5;
}

/* fill handle */
.cell.end::after {
    content: "";
    position: absolute;
    right: -3px;
    bottom: -3px;
    width: 5px;
    height: 5px;
    background: #217346;
    border: 1px solid #fff;
    z-index: 1;
}

/* scrollbars */
.vscroll {
    width: 17px;
    padding: 1px 2px 0;
    display: flex;
    flex-direction: column;
}

.arrow {
    flex: none;
    width: 13px;
    height: 13px;
    background: #fff;
    border: 1px solid #888;
}

.thumb {
    flex: 1;
    background: #fff;
    border: 1px solid #888;
}

.track {
    flex: none;
    background: #d9d9d6;
}

.vscroll .track {
    height: 18px;
}

.hscroll .track {
    width: 22px;
}

/* sheet tabs */
.sheet-bar {
    flex: none;
    height: 18px;
    display: flex;
    align-items: center;
    padding-right: 17px;
    border-left: 1px solid #3f7a5a;
}

.sheet-nav {
    width: 72px;
    padding-left: 19px;
    display: flex;
    gap: 16px;
}

.sheet-tab {
    width: 43px;
    height: 17px;
    align-self: flex-start;
    background: #fff;
    border-bottom: 1px solid #217346;
    color: #217346;
    font-size: 12px;
    font-weight: 700;
    line-height: 14px;
    text-align: center;
}

.add-sheet {
    margin-left: 23px;
}

.grip.push {
    margin: 0 11px 0 auto;
}

.hscroll {
    width: 38%;
    display: flex;
}

/* taskbar */
.taskbar {
    flex: none;
    height: 36px;
    display: flex;
    background: #f0f0f0;
}

.task-search {
    width: 300px;
    padding-left: 13px;
    display: flex;
    align-items: center;
    gap: 8px;
    background: #fff;
    font-size: 12px;
}

.task-input {
    flex: 1;
}

.task-input::placeholder {
    color: #444;
}

.task-apps {
    width: 478px;
    display: grid;
    grid-template-columns: repeat(11, 1fr);
}

.app-btn.current {
    background: #fbfbfb;
}

.weather {
    flex: 1;
    padding-left: 109px;
    display: flex;
    align-items: center;
    gap: 7px;
    overflow: hidden;
    white-space: nowrap;
    font-size: 12px;
    color: #222;
}
```
